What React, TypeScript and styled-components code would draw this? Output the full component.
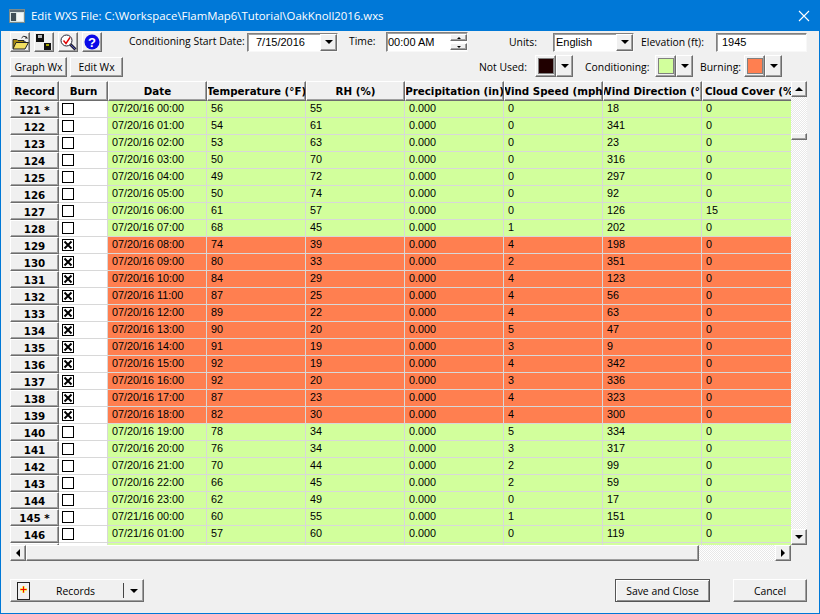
import * as React from 'react';
import styled, { createGlobalStyle, css } from 'styled-components';

const GlobalStyle = createGlobalStyle`
  html, body {
    margin: 0;
    padding: 0;
    background: #f0f0f0;
  }
`;

const GREEN = '#d2ff9c';
const CORAL = '#ff7f50';
const GRID_LINE = '#d8d8d8';

const raised = css`
  background-color: #f0f0f0;
  border-style: solid;
  border-width: 1px;
  border-color: #ffffff #6d6d6d #6d6d6d #ffffff;
  box-shadow: inset -1px -1px 0 #a0a0a0;
  box-sizing: border-box;
`;

const sunken = css`
  background-color: #ffffff;
  border-style: solid;
  border-width: 1px;
  border-color: #808080 #f8f8f8 #f8f8f8 #808080;
  box-shadow: inset 1px 1px 0 #a0a0a0;
  box-sizing: border-box;
`;

const dither = css`
  background: repeating-conic-gradient(#e8e8e8 0 25%, #ffffff 0 50%) 0 0 / 2px 2px;
`;

const Window = styled.div`
  width: 820px;
  height: 614px;
  box-sizing: border-box;
  border: 1px solid #0078d7;
  border-top: none;
  background: #f0f0f0;
  display: flex;
  flex-direction: column;
  overflow: hidden;
  font-family: 'Open Sans', 'Liberation Sans', sans-serif;
  font-size: 10.4px;
  color: #000;
`;

const TitleBar = styled.div`
  height: 31px;
  margin: 0 -1px;
  flex: none;
  background: #0078d7;
  color: #fff;
  display: flex;
  align-items: center;
  padding: 0 10px 0 9px;
  font-family: 'Open Sans', 'Noto Sans', sans-serif;
  font-size: 11.4px;
`;

const TitleText = styled.span`
  margin-left: 6px;
  flex: 1;
`;

const Controls = styled.div`
  flex: none;
  display: flex;
  flex-direction: column;
  padding: 1px 12px 0 9px;
  height: 50px;
  box-sizing: border-box;
`;

const Row = styled.div<{ $height: number }>`
  display: flex;
  align-items: center;
  height: ${(p) => p.$height}px;
  flex: none;
`;

const ToolButton = styled.div`
  ${raised}
  width: 20px;
  height: 20px;
  margin-right: 4px;
  display: flex;
  align-items: center;
  justify-content: center;
`;

const Label = styled.span<{ $left: number; $width: number; $lift?: number }>`
  margin-left: ${(p) => p.$left}px;
  width: ${(p) => p.$width}px;
  margin-bottom: ${(p) => p.$lift ?? 0}px;
  flex: none;
  white-space: nowrap;
`;

const Combo = styled.div<{ $left: number; $width: number; $pad: number }>`
  ${sunken}
  margin-left: ${(p) => p.$left}px;
  width: ${(p) => p.$width}px;
  height: 19px;
  display: flex;
  align-items: center;
  justify-content: space-between;
  padding-left: ${(p) => p.$pad}px;
  font-family: 'Liberation Sans', sans-serif;
  font-size: 11px;
`;

const ComboButton = styled.div`
  ${raised}
  width: 17px;
  height: 17px;
  display: flex;
  align-items: center;
  justify-content: center;
`;

const DownArrow = styled.span`
  width: 0;
  height: 0;
  border-left: 4px solid transparent;
  border-right: 4px solid transparent;
  border-top: 4px solid #000;
`;

const Field = styled.div<{ $left: number; $width: number }>`
  ${sunken}
  margin-left: ${(p) => p.$left}px;
  width: ${(p) => p.$width}px;
  height: 19px;
  display: flex;
  align-items: center;
  padding-left: 5px;
  font-family: 'Liberation Sans', sans-serif;
  font-size: 11px;
`;

const TimeField = styled(Field)`
  height: 20px;
  padding-left: 1px;
  justify-content: space-between;
  padding-right: 0;
`;

const Spin = styled.div`
  display: flex;
  flex-direction: column;
  gap: 2px;
`;

const SpinPart = styled.div`
  ${raised}
  width: 17px;
  height: 7px;
  display: flex;
  align-items: center;
  justify-content: center;
`;

const TinyArrow = styled.span<{ $up?: boolean }>`
  width: 0;
  height: 0;
  border-left: 2px solid transparent;
  border-right: 2px solid transparent;
  ${(p) => (p.$up ? 'border-bottom: 2px solid #000;' : 'border-top: 2px solid #000;')}
`;

const TextButton = styled.div<{ $width: number }>`
  ${raised}
  width: ${(p) => p.$width}px;
  height: 20px;
  margin-right: 3px;
  display: flex;
  align-items: center;
  justify-content: center;
`;

const Spacer = styled.div`
  flex: 1;
`;

const ColorGroup = styled.div<{ $left: number }>`
  margin-left: ${(p) => p.$left}px;
  margin-bottom: 2px;
  display: flex;
  height: 22px;
  width: 38px;
  flex: none;
`;

const SwatchFrame = styled.div`
  ${raised}
  width: 21px;
  height: 22px;
  display: flex;
  align-items: center;
  justify-content: center;
`;

const Swatch = styled.div<{ $color: string }>`
  width: 14px;
  height: 14px;
  background: ${(p) => p.$color};
  border: 1px solid #808080;
`;

const SwatchArrow = styled.div`
  ${raised}
  width: 17px;
  height: 22px;
  display: flex;
  align-items: center;
  justify-content: center;
`;

const GridArea = styled.div`
  flex: none;
  margin-left: 9px;
  width: 797px;
  height: 480px;
  display: grid;
  grid-template-columns: 781px 16px;
  grid-template-rows: 464px 16px;
`;

const Table = styled.div`
  overflow: hidden;
  background: #fff;
`;

const TableRow = styled.div`
  display: grid;
  grid-template-columns: 49px 49px repeat(7, 99px);
  height: 17px;
  box-sizing: border-box;
  width: 792px;
`;

const HeaderRow = styled(TableRow)`
  height: 20px;
`;

const HeaderCell = styled.div`
  ${raised}
  display: flex;
  align-items: center;
  justify-content: center;
  white-space: nowrap;
  overflow: hidden;
  font-family: 'DejaVu Sans', sans-serif;
  font-weight: 700;
  font-size: 10.3px;
`;

const RecordCell = styled(HeaderCell)`
  height: 17px;
`;

const BurnCell = styled.div`
  background: #fff;
  border-bottom: 1px solid ${GRID_LINE};
  border-right: 1px solid ${GRID_LINE};
  box-sizing: border-box;
  padding: 2px 0 0 3px;
`;

const CheckBox = styled.div`
  width: 12px;
  height: 12px;
  box-sizing: border-box;
  border: 1px solid #000;
  background: #fff;
  display: flex;
  align-items: center;
  justify-content: center;
`;

const DataCell = styled.div<{ $burn: boolean }>`
  background: ${(p) => (p.$burn ? CORAL : GREEN)};
  border-bottom: 1px solid ${GRID_LINE};
  border-right: 1px solid ${GRID_LINE};
  box-sizing: border-box;
  padding-left: 4px;
  font-family: 'Liberation Sans', sans-serif;
  font-size: 10.8px;
  line-height: 15px;
  white-space: nowrap;
  overflow: hidden;
`;

const VScroll = styled.div`
  ${dither}
  display: flex;
  flex-direction: column;
  justify-content: space-between;
  position: relative;
`;

const ScrollButton = styled.div`
  ${raised}
  width: 16px;
  height: 16px;
  flex: none;
  display: flex;
  align-items: center;
  justify-content: center;
`;

const VThumb = styled.div`
  ${raised}
  position: absolute;
  top: 52px;
  left: 0;
  width: 16px;
  height: 7px;
`;

const HScroll = styled.div`
  ${dither}
  display: flex;
  align-items: stretch;
`;

const HThumb = styled.div`
  ${raised}
  width: 673px;
  height: 16px;
  flex: none;
`;

const ArrowUp = styled.span`
  width: 0;
  height: 0;
  border-left: 4px solid transparent;
  border-right: 4px solid transparent;
  border-bottom: 4px solid #000;
`;

const ArrowLeft = styled.span`
  width: 0;
  height: 0;
  border-top: 4px solid transparent;
  border-bottom: 4px solid transparent;
  border-right: 4px solid #000;
`;

const ArrowRight = styled.span`
  width: 0;
  height: 0;
  border-top: 4px solid transparent;
  border-bottom: 4px solid transparent;
  border-left: 4px solid #000;
`;

const Footer = styled.div`
  flex: none;
  display: flex;
  align-items: center;
  margin-top: 18px;
  padding: 0 12px 0 9px;
  height: 23px;
`;

const RecordsButton = styled.div`
  ${raised}
  width: 134px;
  height: 23px;
  display: flex;
  align-items: center;
  padding-left: 6px;
`;

const PlusBox = styled.div`
  width: 13px;
  height: 18px;
  box-sizing: border-box;
  border: 1px solid #222;
  display: flex;
  align-items: center;
  justify-content: center;
  padding-bottom: 3px;
  background: #f0f0f0;
`;

const RecordsLabel = styled.span`
  flex: 1;
  text-align: center;
  padding-right: 2px;
`;

const RecordsDivider = styled.div`
  width: 1px;
  height: 15px;
  background: #444;
`;

const RecordsArrow = styled.div`
  width: 19px;
  display: flex;
  align-items: center;
  justify-content: center;
`;

const FooterButton = styled.div<{ $width: number; $left: number; $default?: boolean }>`
  ${raised}
  width: ${(p) => p.$width}px;
  margin-left: ${(p) => p.$left}px;
  height: 23px;
  display: flex;
  align-items: center;
  justify-content: center;
  ${(p) =>
    p.$default &&
    css`
      border-color: #555;
      box-shadow: inset 1px 1px 0 #fff, inset -1px -1px 0 #909090;
    `}
`;

type Wx = [string, number, number, number, number, number];

const rows: Wx[] = [
  ['07/20/16 00:00', 56, 55, 0, 18, 0],
  ['07/20/16 01:00', 54, 61, 0, 341, 0],
  ['07/20/16 02:00', 53, 63, 0, 23, 0],
  ['07/20/16 03:00', 50, 70, 0, 316, 0],
  ['07/20/16 04:00', 49, 72, 0, 297, 0],
  ['07/20/16 05:00', 50, 74, 0, 92, 0],
  ['07/20/16 06:00', 61, 57, 0, 126, 15],
  ['07/20/16 07:00', 68, 45, 1, 202, 0],
  ['07/20/16 08:00', 74, 39, 4, 198, 0],
  ['07/20/16 09:00', 80, 33, 2, 351, 0],
  ['07/20/16 10:00', 84, 29, 4, 123, 0],
  ['07/20/16 11:00', 87, 25, 4, 56, 0],
  ['07/20/16 12:00', 89, 22, 4, 63, 0],
  ['07/20/16 13:00', 90, 20, 5, 47, 0],
  ['07/20/16 14:00', 91, 19, 3, 9, 0],
  ['07/20/16 15:00', 92, 19, 4, 342, 0],
  ['07/20/16 16:00', 92, 20, 3, 336, 0],
  ['07/20/16 17:00', 87, 23, 4, 323, 0],
  ['07/20/16 18:00', 82, 30, 4, 300, 0],
  ['07/20/16 19:00', 78, 34, 5, 334, 0],
  ['07/20/16 20:00', 76, 34, 3, 317, 0],
  ['07/20/16 21:00', 70, 44, 2, 99, 0],
  ['07/20/16 22:00', 66, 45, 2, 59, 0],
  ['07/20/16 23:00', 62, 49, 0, 17, 0],
  ['07/21/16 00:00', 60, 55, 1, 151, 0],
  ['07/21/16 01:00', 57, 60, 0, 119, 0],
];

const headers = [
  'Record',
  'Burn',
  'Date',
  'Temperature (°F)',
  'RH (%)',
  'Precipitation (in)',
  'Wind Speed (mph)',
  'Wind Direction (°)',
  'Cloud Cover (%)',
];

const FolderIcon = () => (
  <svg width="17" height="15" viewBox="0 0 17 15">
    <path d="M9.5 3 Q11 0.5 13.5 1.5 L15 3" fill="none" stroke="#222" />
    <path d="M14 1 L16 3.5 L13 3.5 Z" fill="#222" />
    <path d="M1 13.5 V4.5 H5 L6 5.5 H12 V7 H14" fill="#a88a10" stroke="#222" />
    <path d="M1 14 L4 7.5 H16.5 L13 14 Z" fill="#f4e060" stroke="#222" />
  </svg>
);

const SaveAllIcon = () => (
  <svg width="16" height="16" viewBox="0 0 16 16">
    <rect x="0" y="0" width="8" height="8" fill="#111" />
    <rect x="2" y="1" width="4" height="3" fill="#b8b8b8" />
    <rect x="8" y="9" width="7" height="7" fill="#111" />
    <rect x="10" y="10" width="3" height="2" fill="#a8a800" />
  </svg>
);

const MagnifierIcon = () => (
  <svg width="17" height="17" viewBox="0 0 17 17">
    <path d="M10 10 L15.5 15.5" stroke="#223" strokeWidth="3" />
    <path d="M11 11 L15 15" stroke="#5050c0" strokeWidth="1" />
    <circle cx="6.5" cy="6.5" r="5.5" fill="#fff" stroke="#223" />
    <path d="M3.5 6.5 L6 9.5 L10 3.5" fill="none" stroke="#e00000" strokeWidth="1.4" />
  </svg>
);

const HelpIcon = () => (
  <svg width="16" height="16" viewBox="0 0 16 16">
    <circle cx="8" cy="8" r="7.5" fill="#0a0ae8" />
    <text x="8" y="12.5" textAnchor="middle" fill="#fff" fontFamily="Liberation Sans" fontWeight="700" fontSize="13">
      ?
    </text>
  </svg>
);

const WindowIcon = () => (
  <svg width="16" height="16" viewBox="0 0 16 16">
    <rect x="0.5" y="1.5" width="15" height="13" fill="#d8e4e4" stroke="#7c8c8c" />
    <rect x="1" y="2" width="14" height="2" fill="#5c6c78" />
    <rect x="2" y="5" width="5" height="8" fill="#3f4f58" />
    <rect x="8" y="5" width="6" height="8" fill="#f4f8f8" />
  </svg>
);

const CloseIcon = () => (
  <svg width="12" height="12" viewBox="0 0 12 12">
    <path d="M1 1 L11 11 M11 1 L1 11" stroke="#fff" strokeWidth="1.1" />
  </svg>
);

const CheckMark = () => (
  <svg width="10" height="10" viewBox="0 0 10 10">
    <path d="M1.5 1.5 L8.5 8.5 M8.5 1.5 L1.5 8.5" stroke="#000" strokeWidth="2" />
  </svg>
);

const PlusIcon = () => (
  <svg width="7" height="7" viewBox="0 0 7 7">
    <path d="M3.5 0 V7 M0 3.5 H7" stroke="#ffe000" strokeWidth="2" />
    <path d="M3.5 0.5 V6.5 M0.5 3.5 H6.5" stroke="#f00000" strokeWidth="1" />
  </svg>
);

const ColorPicker = ({ color, left }: { color: string; left: number }) => (
  <ColorGroup $left={left}>
    <SwatchFrame>
      <Swatch $color={color} />
    </SwatchFrame>
    <SwatchArrow>
      <DownArrow />
    </SwatchArrow>
  </ColorGroup>
);

export default function App() {
  return (
    <>
      <GlobalStyle />
      <Window>
        <TitleBar>
          <WindowIcon />
          <TitleText>Edit WXS File: C:\Workspace\FlamMap6\Tutorial\OakKnoll2016.wxs</TitleText>
          <CloseIcon />
        </TitleBar>

        <Controls>
          <Row $height={20}>
            <ToolButton><FolderIcon /></ToolButton>
            <ToolButton><SaveAllIcon /></ToolButton>
            <ToolButton><MagnifierIcon /></ToolButton>
            <ToolButton><HelpIcon /></ToolButton>
            <Label $left={23} $width={115} $lift={3}>Conditioning Start Date:</Label>
            <Combo $left={3} $width={91} $pad={8}>
              7/15/2016
              <ComboButton><DownArrow /></ComboButton>
            </Combo>
            <Label $left={11} $width={26} $lift={2}>Time:</Label>
            <TimeField $left={11} $width={82}>
              00:00 AM
              <Spin>
                <SpinPart><TinyArrow $up /></SpinPart>
                <SpinPart><TinyArrow /></SpinPart>
              </Spin>
            </TimeField>
            <Label $left={41} $width={28}>Units:</Label>
            <Combo $left={16} $width={81} $pad={2}>
              English
              <ComboButton><DownArrow /></ComboButton>
            </Combo>
            <Label $left={7} $width={67}>Elevation (ft):</Label>
            <Field $left={8} $width={91}>1945</Field>
          </Row>
          <Row $height={29}>
            <TextButton $width={57}>Graph Wx</TextButton>
            <TextButton $width={53}>Edit Wx</TextButton>
            <Spacer />
            <Label $left={0} $width={48}>Not Used:</Label>
            <ColorPicker color="#200000" left={8} />
            <Label $left={12} $width={63}>Conditioning:</Label>
            <ColorPicker color={GREEN} left={7} />
            <Label $left={7} $width={40}>Burning:</Label>
            <ColorPicker color={CORAL} left={4} />
            <Label $left={25} $width={0} />
          </Row>
        </Controls>

        <GridArea>
          <Table>
            <HeaderRow>
              {headers.map((h) => (
                <HeaderCell key={h}>{h}</HeaderCell>
              ))}
            </HeaderRow>
            {rows.map((r, i) => {
              const record = 121 + i;
              const burn = record >= 129 && record <= 139;
              const marked = record === 121 || record === 145;
              return (
                <TableRow key={record}>
                  <RecordCell>{record}{marked ? ' *' : ''}</RecordCell>
                  <BurnCell>
                    <CheckBox>{burn && <CheckMark />}</CheckBox>
                  </BurnCell>
                  <DataCell $burn={burn}>{r[0]}</DataCell>
                  <DataCell $burn={burn}>{r[1]}</DataCell>
                  <DataCell $burn={burn}>{r[2]}</DataCell>
                  <DataCell $burn={burn}>0.000</DataCell>
                  <DataCell $burn={burn}>{r[3]}</DataCell>
                  <DataCell $burn={burn}>{r[4]}</DataCell>
                  <DataCell $burn={burn}>{r[5]}</DataCell>
                </TableRow>
              );
            })}
            <TableRow>
              <RecordCell />
              <BurnCell />
              {[0, 1, 2, 3, 4, 5, 6].map((c) => (
                <DataCell key={c} $burn={false} />
              ))}
            </TableRow>
          </Table>
          <VScroll>
            <ScrollButton><ArrowUp /></ScrollButton>
            <VThumb />
            <ScrollButton><DownArrow /></ScrollButton>
          </VScroll>
          <HScroll>
            <ScrollButton><ArrowLeft /></ScrollButton>
            <HThumb />
            <Spacer />
            <ScrollButton><ArrowRight /></ScrollButton>
          </HScroll>
        </GridArea>

        <Footer>
          <RecordsButton>
            <PlusBox><PlusIcon /></PlusBox>
            <RecordsLabel>Records</RecordsLabel>
            <RecordsDivider />
            <RecordsArrow><DownArrow /></RecordsArrow>
          </RecordsButton>
          <Spacer />
          <FooterButton $width={95} $left={0} $default>Save and Close</FooterButton>
          <FooterButton $width={74} $left={23}>Cancel</FooterButton>
        </Footer>
      </Window>
    </>
  );
}
